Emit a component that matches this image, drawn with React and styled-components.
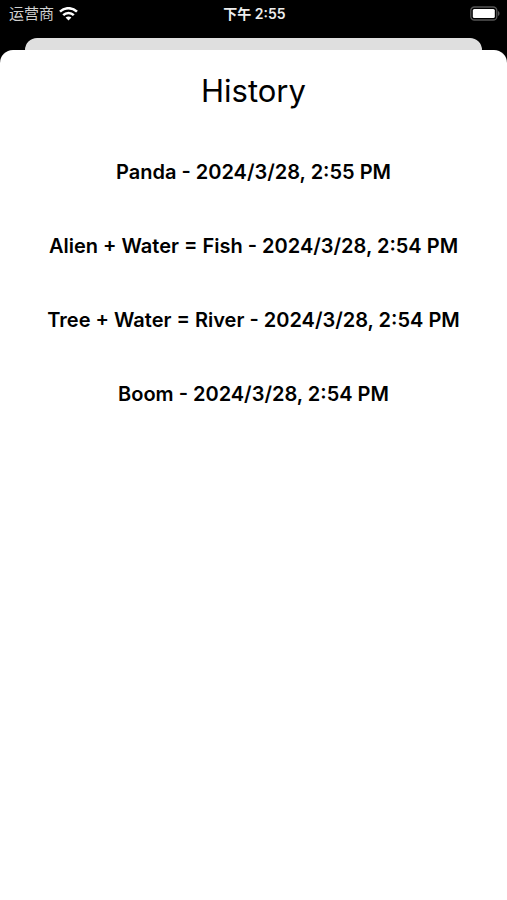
import React from 'react'
import styled, { createGlobalStyle } from 'styled-components';

const GlobalStyle = createGlobalStyle`
  * {
    box-sizing: border-box;
  }
  body {
    margin: 0;
    background: #000;
    font-family: Inter, "Noto Sans CJK SC", sans-serif;
  }
`;

const Screen = styled.div`
  display: flex;
  flex-direction: column;
  min-height: 100vh;
  background: #000;
`;

const StatusBar = styled.header`
  display: grid;
  grid-template-columns: 1fr auto 1fr;
  align-items: center;
  height: 28px;
  padding: 0 7px 0 9px;
  color: #eee;
  font-size: 14px;
  line-height: 20px;
`;

const Carrier = styled.div`
  display: flex;
  align-items: center;
  gap: 5px;
  color: #d0d0d0;
  font-size: 15px;
`;

const Clock = styled.time`
  font-weight: 600;
`;

const Battery = styled.svg`
  justify-self: end;
`;

const BackCard = styled.div`
  height: 12px;
  margin: 10px 25px 0;
  border-radius: 12px 12px 0 0;
  background: #dfdfdf;
`;

const Sheet = styled.main`
  flex: 1;
  padding: 20px 16px;
  border-radius: 13px 13px 0 0;
  background: #fff;
  color: #000;
  text-align: center;
`;

const Title = styled.h1`
  margin: 0 0 23px;
  font-size: 31px;
  font-weight: 400;
  line-height: 42px;
`;

const HistoryList = styled.ul`
  margin: 0;
  padding: 0;
  list-style: none;
`;

const HistoryItem = styled.li`
  padding: 24px 0;
  font-size: 20px;
  font-weight: 600;
  line-height: 26px;
`;

const history = [
  { event: 'Panda', date: '2024/3/28, 2:55 PM' },
  { event: 'Alien + Water = Fish', date: '2024/3/28, 2:54 PM' },
  { event: 'Tree + Water = River', date: '2024/3/28, 2:54 PM' },
  { event: 'Boom', date: '2024/3/28, 2:54 PM' },
];

const WifiIcon = () => (
  <svg width="19" height="14" viewBox="0 0 19 14" fill="none" stroke="#fff" strokeWidth="2.5">
    <path d="M1 4.7C5.8 0 13.2 0 18 4.7" />
    <path d="M4.2 8.1c3-2.9 7.6-2.9 10.6 0" />
    <path d="M9.5 13.4 6.6 10.5c1.7-1.5 4.1-1.5 5.8 0z" fill="#fff" stroke="none" />
  </svg>
);

const BatteryIcon = () => (
  <Battery width="30" height="16" viewBox="0 0 30 16">
    <rect x=".8" y="1" width="26" height="13" rx="3.6" fill="none" stroke="#555" strokeWidth="1.3" />
    <rect x="2.8" y="3" width="22" height="9" rx="1.5" fill="#fff" />
    <path d="M28 5c2 .8 2 4.2 0 5z" fill="#555" />
  </Battery>
);

const App = () => {
    return (
      <Screen>
        <GlobalStyle />
        <StatusBar>
            <Carrier>
                <span>运营商</span>
                <WifiIcon />
            </Carrier>
            <Clock>下午 2:55</Clock>
            <BatteryIcon />
        </StatusBar>
        <BackCard />
        <Sheet>
            <Title>History</Title>
            <HistoryList>
                {history.map((item, index) => (
                    <HistoryItem key={index}>
                        {item.event} - {item.date}
                    </HistoryItem>
                ))}
            </HistoryList>
        </Sheet>
      </Screen>
    );
};


export default App
